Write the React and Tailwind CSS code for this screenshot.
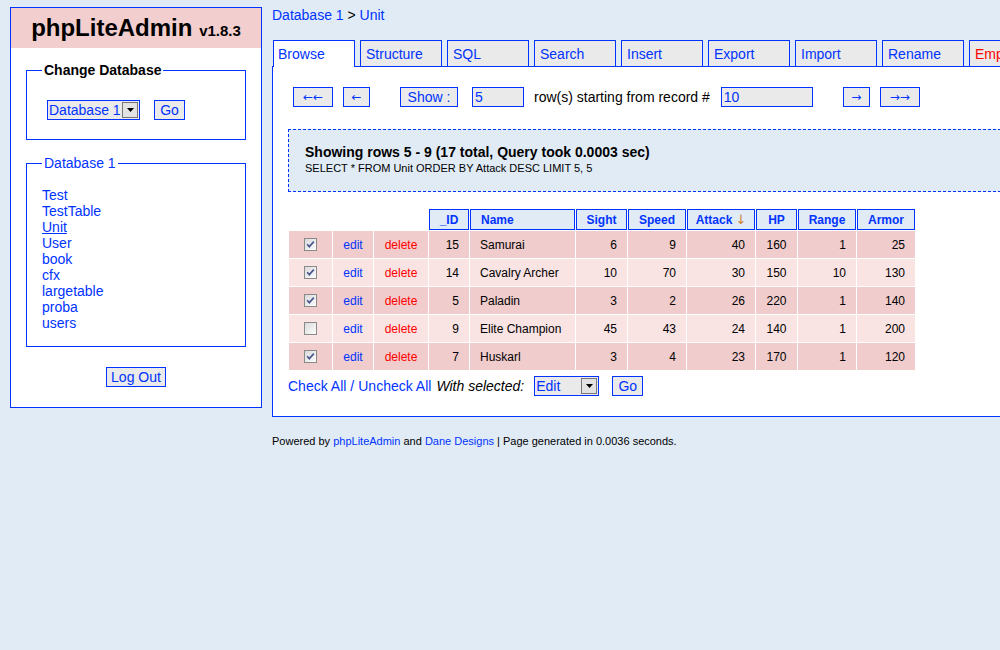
import React from "react";

const tables = ["Test", "TestTable", "Unit", "User", "book", "cfx", "largetable", "proba", "users"];
const tabs = ["Browse", "Structure", "SQL", "Search", "Insert", "Export", "Import", "Rename", "Empty"];

const rows = [
  { checked: true, id: 15, name: "Samurai", sight: 6, speed: 9, attack: 40, hp: 160, range: 1, armor: 25 },
  { checked: true, id: 14, name: "Cavalry Archer", sight: 10, speed: 70, attack: 30, hp: 150, range: 10, armor: 130 },
  { checked: true, id: 5, name: "Paladin", sight: 3, speed: 2, attack: 26, hp: 220, range: 1, armor: 140 },
  { checked: false, id: 9, name: "Elite Champion", sight: 45, speed: 43, attack: 24, hp: 140, range: 1, armor: 200 },
  { checked: true, id: 7, name: "Huskarl", sight: 3, speed: 4, attack: 23, hp: 170, range: 1, armor: 120 },
];

function CheckBox({ checked }) {
  return (
    <svg width="13" height="13" viewBox="0 0 13 13">
      <defs>
        <linearGradient id="cbfill" x1="0" y1="0" x2="1" y2="1">
          <stop offset="0" stopColor="#d8d8d8" />
          <stop offset="1" stopColor="#ffffff" />
        </linearGradient>
      </defs>
      <rect x="0.5" y="0.5" width="12" height="12" fill="url(#cbfill)" stroke="#8a8a8a" />
      {checked && <path d="M3.2 6.2 L5.3 8.6 L9.8 3.6" fill="none" stroke="#4b5a8e" strokeWidth="1.7" />}
    </svg>
  );
}

function FakeSelect({ label, width }) {
  return (
    <div className={`flex h-[20px] items-stretch border border-[#0033ff] bg-[#eaeaea] ${width}`}>
      <span className="flex-1 overflow-hidden whitespace-nowrap pl-[1px] text-[14px] leading-[18px] text-[#0033ff]">{label}</span>
      <span className="m-[1px] flex w-[16px] shrink-0 items-center justify-center border border-[#777777] bg-[#e2e2e2]">
        <svg width="7" height="4" viewBox="0 0 7 4">
          <path d="M0 0h7L3.5 4z" fill="#000" />
        </svg>
      </span>
    </div>
  );
}

function Btn({ children, className = "" }) {
  return (
    <button className={`flex h-[20px] items-center justify-center whitespace-nowrap border border-[#0033ff] bg-[#eaeaea] text-[14px] leading-none text-[#0033ff] ${className}`}>
      {children}
    </button>
  );
}

function Arrows({ children }) {
  return <span className="font-['DejaVu_Sans',sans-serif] text-[12px]">{children}</span>;
}

export default function App() {
  return (
    <div className="h-[650px] w-[1000px] overflow-hidden bg-[#e0ebf6] font-['Liberation_Sans',Arial,sans-serif] text-black">
      <div className="flex items-start">
        {/* left panel */}
        <div className="ml-[10px] mt-[7px] w-[252px] shrink-0 border border-[#0033ff] bg-white pb-[20px]">
          <div className="flex h-[40px] items-center justify-center bg-[#f2cece] pt-[3px]">
            <h1 className="text-[24px] font-bold leading-[28px]">
              phpLiteAdmin <span className="text-[15px]">v1.8.3</span>
            </h1>
          </div>

          <fieldset className="mx-[15px] mt-[14px] border border-[#0033ff] p-0">
            <legend className="ml-[15px] px-[2px] text-[14px] font-bold leading-[16px]">Change Database</legend>
            <div className="flex pb-[19px] pl-[20px] pt-[22px]">
              <FakeSelect label="Database 1" width="w-[93px]" />
              <Btn className="ml-[14px] w-[31px]">Go</Btn>
            </div>
          </fieldset>

          <fieldset className="mx-[15px] mt-[15px] border border-[#0033ff] p-0">
            <legend className="ml-[15px] px-[2px] text-[14px] leading-[16px] text-[#0033ff]">Database 1</legend>
            <div className="pb-[15px] pl-[15px] pt-[16px]">
              {tables.map((t) => (
                <div key={t} className="text-[14px] leading-[16px]">
                  <a className={`text-[#0033ff] ${t === "Unit" ? "underline" : ""}`}>{t}</a>
                </div>
              ))}
            </div>
          </fieldset>

          <div className="mt-[20px] flex justify-center">
            <Btn className="w-[60px]">Log Out</Btn>
          </div>
        </div>

        {/* main column */}
        <div className="ml-[10px] w-[780px] shrink-0">
          <div className="h-[23px] pt-[7px] text-[14px] leading-[16px]">
            <a className="text-[#0033ff]">Database 1</a> &gt; <a className="text-[#0033ff]">Unit</a>
          </div>

          <div className="mt-[17px] flex items-end gap-[5px] pl-[1px]">
            {tabs.map((t, i) =>
              i === 0 ? (
                <div key={t} className="relative z-10 -mb-[1px] flex h-[27px] w-[82px] shrink-0 items-center border-x border-t border-[#0033ff] bg-white pl-[4px] text-[14px] text-[#0033ff]">
                  {t}
                </div>
              ) : (
                <div key={t} className={`flex h-[26px] w-[82px] shrink-0 items-center border-x border-t border-[#0033ff] bg-[#eaeaea] pl-[5px] pt-[1px] text-[14px] ${t === "Empty" ? "text-[#ff0000]" : "text-[#0033ff]"}`}>
                  {t}
                </div>
              )
            )}
          </div>

          <div className="border border-[#0033ff] bg-white pb-[20px] pl-[15px] pr-[15px] pt-[20px]">
            {/* navigation row */}
            <div className="ml-[5px] flex h-[20px] items-center">
              <Btn className="w-[40px]"><Arrows>←←</Arrows></Btn>
              <Btn className="ml-[10px] w-[27px]"><Arrows>←</Arrows></Btn>
              <Btn className="ml-[30px] w-[58px]">Show :</Btn>
              <input readOnly value="5" className="ml-[14px] h-[20px] w-[52px] border border-[#0033ff] bg-[#eaeaea] pl-[2px] text-[14px] text-[#0033ff] outline-none" />
              <span className="ml-[10px] text-[14px]">row(s) starting from record #</span>
              <input readOnly value="10" className="ml-[11px] h-[20px] w-[92px] border border-[#0033ff] bg-[#eaeaea] pl-[2px] text-[14px] text-[#0033ff] outline-none" />
              <Btn className="ml-[30px] w-[27px]"><Arrows>→</Arrows></Btn>
              <Btn className="ml-[10px] w-[40px]"><Arrows>→→</Arrows></Btn>
            </div>

            {/* query info */}
            <div className="mt-[22px] border border-dashed border-[#0033ff] bg-[#e0ebf6] pb-[16px] pl-[16px] pt-[14px]">
              <div className="text-[14px] font-bold leading-[16px]">Showing rows 5 - 9 (17 total, Query took 0.0003 sec)</div>
              <div className="mt-[2px] text-[11px] leading-[13px]">SELECT * FROM Unit ORDER BY Attack DESC LIMIT 5, 5</div>
            </div>

            {/* results table */}
            <div className="ml-[1px] mt-[17px] grid grid-cols-[43px_40px_54px_40px_105px_51px_58px_68px_41px_58px_58px] gap-[1px] text-[12px]">
              <div />
              <div />
              <div />
              {["_ID", "Name", "Sight", "Speed", "Attack", "HP", "Range", "Armor"].map((h) => (
                <div
                  key={h}
                  className={`flex h-[21px] items-center border border-[#0033ff] bg-[#e0ebf6] font-bold text-[#0033ff] ${h === "Name" ? "pl-[10px]" : "justify-center"}`}
                >
                  {h}
                  {h === "Attack" && (
                    <span className="ml-[3px] font-['DejaVu_Sans',sans-serif] text-[13px] font-normal leading-none text-[#d0842e]">↓</span>
                  )}
                </div>
              ))}

              {rows.map((r, i) => {
                const bg = i % 2 === 0 ? "bg-[#f0cccc]" : "bg-[#f9e3e3]";
                const num = `flex h-[27px] items-center justify-end pr-[10px] ${bg}`;
                return (
                  <React.Fragment key={r.id}>
                    <div className={`flex h-[27px] items-center justify-center ${bg}`}>
                      <CheckBox checked={r.checked} />
                    </div>
                    <div className={`flex h-[27px] items-center justify-center text-[#0033ff] ${bg}`}>edit</div>
                    <div className={`flex h-[27px] items-center justify-center text-[#ff0000] ${bg}`}>delete</div>
                    <div className={num}>{r.id}</div>
                    <div className={`flex h-[27px] items-center pl-[10px] ${bg}`}>{r.name}</div>
                    <div className={num}>{r.sight}</div>
                    <div className={num}>{r.speed}</div>
                    <div className={num}>{r.attack}</div>
                    <div className={`flex h-[27px] items-center justify-center ${bg}`}>{r.hp}</div>
                    <div className={num}>{r.range}</div>
                    <div className={num}>{r.armor}</div>
                  </React.Fragment>
                );
              })}
            </div>

            {/* selection actions */}
            <div className="mt-[5px] flex h-[21px] items-center pt-[1px] text-[14px]">
              <a className="text-[#0033ff]">Check All</a>
              <span className="mx-[4px] text-[#0033ff]">/</span>
              <a className="text-[#0033ff]">Uncheck All</a>
              <span className="ml-[5px] italic">With selected:</span>
              <FakeSelect label="Edit" width="ml-[10px] w-[65px]" />
              <Btn className="ml-[13px] w-[31px]">Go</Btn>
            </div>
          </div>

          <div className="mt-[18px] text-[11px] leading-[13px]">
            Powered by <a className="text-[#0033ff]">phpLiteAdmin</a> and <a className="text-[#0033ff]">Dane Designs</a> | Page generated in 0.0036 seconds.
          </div>
        </div>
      </div>
    </div>
  );
}
